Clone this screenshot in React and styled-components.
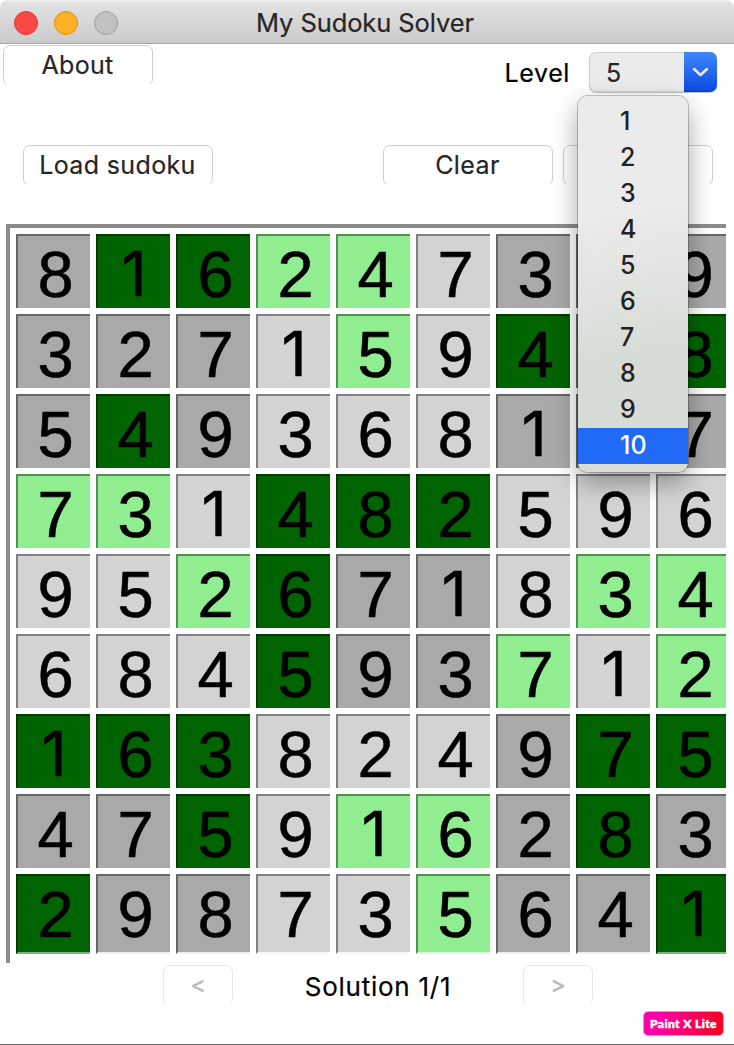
import React from 'react';
import styled, { createGlobalStyle, css } from 'styled-components';

const Global = createGlobalStyle`
  * { box-sizing: border-box; }
  body { margin: 0; background: #fff; overflow: hidden; }
`;

const Window = styled.main`
  width: 734px;
  height: 1045px;
  display: flex;
  flex-direction: column;
  position: relative;
  background: #fff;
  border-bottom: 1px solid #707070;
  font-family: Inter, "Liberation Sans", sans-serif;
  font-size: 25px;
  color: #262626;
  -webkit-text-stroke: 0.2px currentColor;
  overflow: hidden;
`;

const TitleBar = styled.header`
  height: 44px;
  flex: none;
  display: grid;
  grid-template-columns: 119px 1fr 123px;
  align-items: center;
  background: linear-gradient(#f3f3f3 0, #e2e2e2 2px, #cbcbcb 42px);
  border-bottom: 1px solid #a9a9a9;
  border-top-left-radius: 8px;
  border-top-right-radius: 8px;
`;

const Lights = styled.div`
  display: flex;
  gap: 16px;
  padding-left: 14px;
`;

const Light = styled.span`
  width: 24px;
  height: 24px;
  border-radius: 50%;
  background: ${(p) => p.$fill};
  border: 1px solid ${(p) => p.$edge};
`;

const Title = styled.h1`
  margin: 0;
  font-size: 25.5px;
  line-height: 46px;
  font-weight: 400;
  text-align: center;
  white-space: nowrap;
  letter-spacing: -0.1px;
`;

const TopRow = styled.div`
  height: 101px;
  flex: none;
  display: flex;
  align-items: flex-start;
  padding: 1px 17px 0 3px;
`;

const Button = styled.button`
  width: ${(p) => p.$w}px;
  height: 41px;
  padding: 0 1px 1px 0;
  border: 1.5px solid #cfcfcf;
  border-radius: 7px;
  background: #fff;
  font: inherit;
  line-height: 38px;
  color: inherit;
  letter-spacing: ${(p) => p.$track || 0}px;
  white-space: nowrap;
  clip-path: inset(0 0 2px 0);
  ${(p) => p.disabled && css`
    padding-right: 0;
    border-color: #e6e6e6;
    color: #b9b9b9;
    font-size: 23px;
    -webkit-text-stroke: 0.5px #b9b9b9;
  `}
`;

const LevelLabel = styled.label`
  margin: 7px 19px 0 auto;
  line-height: 42px;
  color: #000;
  letter-spacing: 0.6px;
`;

const Select = styled.div`
  width: 128px;
  height: 40px;
  margin-top: 7px;
  display: flex;
  border-radius: 7px;
  overflow: hidden;
  background: #ebebeb;
  box-shadow: 0 1px 1px rgba(0, 0, 0, 0.25);
`;

const SelectValue = styled.span`
  flex: 1;
  padding-left: 16px;
  border: 1px solid #cfcfcf;
  border-right: 0;
  border-radius: 7px 0 0 7px;
  line-height: 40px;
`;

const SelectArrow = styled.span`
  width: 33px;
  display: grid;
  place-items: center;
  background: linear-gradient(#3f87fb, #0a4ce0);
  border-bottom: 1px solid #0739c8;
`;

const Menu = styled.ul`
  position: absolute;
  left: 578px;
  top: 96px;
  width: 110px;
  height: 376px;
  margin: 0;
  padding: 8px 0;
  list-style: none;
  border-radius: 10px;
  background: linear-gradient(170deg, #ebebeb 0, #ebebeb 30%, #d6dbd5 70%, #d9ddd8 100%);
  box-shadow: 0 0 0 1px rgba(0, 0, 0, 0.22), 0 10px 26px rgba(0, 0, 0, 0.36);
`;

const MenuItem = styled.li`
  height: 36px;
  line-height: 34px;
  padding-left: 42px;
  font-weight: 500;
  font-size: 25px;
  letter-spacing: 0;
  -webkit-text-stroke: 0;
  color: ${(p) => (p.$active ? '#fff' : '#222')};
  background: ${(p) => (p.$active ? '#216af5' : 'transparent')};
`;

const Actions = styled.div`
  height: 79px;
  flex: none;
  display: flex;
  align-items: flex-start;
  gap: 10px;
  padding: 0 21px 0 23px;
`;

const Spacer = styled.span`
  flex: 1;
`;

const Board = styled.section`
  width: 720px;
  height: 739px;
  flex: none;
  margin-left: 6px;
  padding: 6px 0 0 6px;
  border-top: 4px solid #8b8b8b;
  border-left: 4px solid #8b8b8b;
  display: grid;
  grid-template-columns: repeat(9, 74px);
  grid-template-rows: repeat(8, 74px) 80px;
  gap: 6px;
  overflow: hidden;
`;

const tones = {
  g: ['#a9a9a9', '#666', '#eee'],
  l: ['#d3d3d3', '#808080', '#f6f6f6'],
  p: ['#90ee90', '#579057', '#d8f9d8'],
  d: ['#006400', '#003c00', '#80b180'],
};

const Cell = styled.div`
  background: ${(p) => tones[p.$tone][0]};
  border-top: 2px solid ${(p) => tones[p.$tone][1]};
  border-left: 2px solid ${(p) => tones[p.$tone][1]};
  border-bottom: ${(p) => (p.$last ? 2 : 0)}px solid ${(p) => tones[p.$tone][2]};
  padding-left: ${(p) => (p.$one ? 0 : 3)}px;
  color: #000;
  text-align: center;
  -webkit-text-stroke: ${(p) => (p.$one ? 0.5 : 0.6)}px #000;
  font-family: ${(p) => (p.$one ? 'Inter' : '"Liberation Sans"')}, sans-serif;
  font-size: ${(p) => (p.$one ? 62 : 65)}px;
  line-height: ${(p) => (p.$one ? 76 : 77)}px;
`;

const Pager = styled.footer`
  flex: none;
  display: flex;
  align-items: flex-start;
  justify-content: space-between;
  width: 430px;
  margin: 2px 0 0 163px;
`;

const Status = styled.span`
  color: #000;
  font-size: 26px;
  line-height: 44px;
  letter-spacing: 0.75px;
  white-space: nowrap;
`;

const Badge = styled.div`
  position: absolute;
  right: 10px;
  bottom: 8px;
  width: 81px;
  height: 25px;
  border-radius: 5px;
  border: 1px solid #ff8fca;
  background: linear-gradient(100deg, #ff00a8 20%, #f80028 90%);
  color: #fff;
  font: 900 12px/23px Lato, sans-serif;
  letter-spacing: 0.4px;
  -webkit-text-stroke: 0.5px #fff;
  text-align: center;
  white-space: nowrap;
`;

const digits = [
  '8162473 9', '3271594 8', '5493681 7',
  '731482596', '952671834', '684593712',
  '163824975', '475916283', '298735641',
];

const colors = [
  'gddpplggg', 'ggglpldgd', 'gdglllggg',
  'ppldddlll', 'llpdgglpp', 'llldggplp',
  'dddlllgdd', 'ggdlppgdg', 'dggllpggd',
];

const levels = [1, 2, 3, 4, 5, 6, 7, 8, 9, 10];

export default function App() {
  return (
    <>
      <Global />
      <Window>
        <TitleBar>
          <Lights>
            <Light $fill="#fc4948" $edge="#df3435" />
            <Light $fill="#fdb225" $edge="#dd9216" />
            <Light $fill="#c1c1c1" $edge="#a0a0a0" />
          </Lights>
          <Title>My Sudoku Solver</Title>
        </TitleBar>
        <TopRow>
          <Button $w={150} $track={0.3}>About</Button>
          <LevelLabel>Level</LevelLabel>
          <Select>
            <SelectValue>5</SelectValue>
            <SelectArrow>
              <svg width="17" height="10" viewBox="0 0 17 10" fill="none" stroke="#e4edff" strokeWidth="2.5" strokeLinecap="round" strokeLinejoin="round">
                <path d="M2 2 8.5 8 15 2" />
              </svg>
            </SelectArrow>
          </Select>
        </TopRow>
        <Actions>
          <Button $w={190} $track={0.35}>Load sudoku</Button>
          <Spacer />
          <Button $w={170} $track={0.4}>Clear</Button>
          <Button $w={150} />
        </Actions>
        <Board>
          {digits.map((row, r) =>
            [...row].map((n, c) => (
              <Cell key={`${r}-${c}`} $tone={colors[r][c]} $one={n === '1'} $last={r === 8}>
                {n}
              </Cell>
            )),
          )}
        </Board>
        <Pager>
          <Button $w={70} disabled>&lt;</Button>
          <Status>Solution 1/1</Status>
          <Button $w={70} disabled>&gt;</Button>
        </Pager>
        <Menu>
          {levels.map((n) => (
            <MenuItem key={n} $active={n === 10}>{n}</MenuItem>
          ))}
        </Menu>
        <Badge>Paint X Lite</Badge>
      </Window>
    </>
  );
}
